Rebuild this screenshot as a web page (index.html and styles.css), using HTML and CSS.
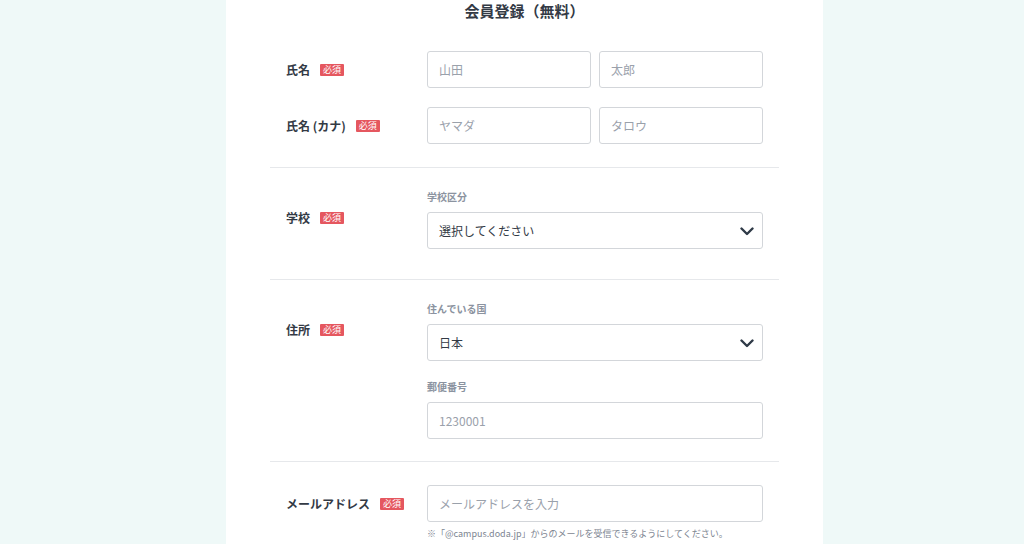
FILE: index.html
```html
<!DOCTYPE html>
<html lang="ja">
<head>
  <meta charset="UTF-8" />
  <meta name="viewport" content="width=device-width, initial-scale=1.0"/>
  <title>会員登録（無料）</title>
  <link rel="stylesheet" href="styles.css">
</head>
<body>

<div class="panel">
  <h1>会員登録（無料）</h1>

  <div class="section section-name">
    <div class="row">
      <div class="label">氏名<span class="req">必須</span></div>
      <div class="fields pair">
        <input type="text" placeholder="山田" />
        <input type="text" placeholder="太郎" />
      </div>
    </div>
    <div class="row">
      <div class="label">氏名 (カナ)<span class="req">必須</span></div>
      <div class="fields pair">
        <input type="text" placeholder="ヤマダ" />
        <input type="text" placeholder="タロウ" />
      </div>
    </div>
  </div>

  <div class="section section-school">
    <div class="row">
      <div class="label label-top">学校<span class="req">必須</span></div>
      <div class="fields">
        <div class="sub">学校区分</div>
        <div class="select">
          <span>選択してください</span>
          <svg width="14" height="9" viewBox="0 0 14 9"><path d="M1.5 1.5 L7 7 L12.5 1.5" fill="none" stroke="#2f3a47" stroke-width="2.4" stroke-linecap="round" stroke-linejoin="round"/></svg>
        </div>
      </div>
    </div>
  </div>

  <div class="section section-address">
    <div class="row">
      <div class="label label-top">住所<span class="req">必須</span></div>
      <div class="fields">
        <div class="sub">住んでいる国</div>
        <div class="select">
          <span>日本</span>
          <svg width="14" height="9" viewBox="0 0 14 9"><path d="M1.5 1.5 L7 7 L12.5 1.5" fill="none" stroke="#2f3a47" stroke-width="2.4" stroke-linecap="round" stroke-linejoin="round"/></svg>
        </div>
        <div class="sub sub-next">郵便番号</div>
        <input type="text" placeholder="1230001" />
      </div>
    </div>
  </div>

  <div class="section section-mail">
    <div class="row">
      <div class="label">メールアドレス<span class="req">必須</span></div>
      <div class="fields">
        <input type="text" placeholder="メールアドレスを入力" />
        <p class="note">※「@campus.doda.jp」からのメールを受信できるようにしてください。</p>
      </div>
    </div>
  </div>
</div>

</body>
</html>
```

FILE: styles.css
```css
* {
  box-sizing: border-box;
}

body {
  margin: 0;
  padding: 0;
  font-family: 'Noto Sans CJK JP', 'Noto Sans', sans-serif;
  background: #eff9f8;
  color: #333a45;
  min-height: 100vh;
}

.panel {
  background: #fff;
  width: 597px;
  margin-left: 226px;
  padding: 0 44px;
  min-height: 544px;
}

.panel h1 {
  margin: 0;
  height: 24px;
  line-height: 22px;
  text-align: center;
  font-size: 15px;
  font-weight: bold;
  color: #333a45;
}

.section {
  border-bottom: 1px solid #e6e8eb;
}

.section-name {
  padding: 27px 0 23px;
}

.section-school {
  padding: 21px 0 30px;
}

.section-address {
  padding: 21px 0 22px;
}

.section-mail {
  padding: 23px 0 0;
  border-bottom: none;
}

.row {
  display: flex;
  padding-left: 16px;
}

.row + .row {
  margin-top: 19px;
}

.label {
  width: 141px;
  height: 37px;
  display: flex;
  align-items: center;
  font-size: 12px;
  font-weight: bold;
  color: #333a45;
  flex-shrink: 0;
}

.label-top {
  margin-top: 10px;
}

.req {
  display: inline-block;
  margin-left: 10px;
  background: #e5575f;
  color: #fff;
  font-size: 9px;
  font-weight: normal;
  line-height: 12px;
  padding: 0 3px;
  border-radius: 1px;
}

.fields {
  width: 336px;
}

.pair {
  display: flex;
  gap: 8px;
}

.pair input {
  width: 164px;
}

input {
  display: block;
  width: 100%;
  height: 37px;
  padding: 0 11px;
  border: 1px solid #d3d6da;
  border-radius: 3px;
  font-family: inherit;
  font-size: 12px;
  color: #333a45;
  background: #fff;
}

input::placeholder {
  color: #9aa1ab;
}

.sub {
  font-size: 10px;
  font-weight: bold;
  color: #8b93a0;
  line-height: 16px;
  margin-bottom: 7px;
}

.sub-next {
  margin-top: 18px;
}

.select {
  height: 37px;
  border: 1px solid #d3d6da;
  border-radius: 3px;
  display: flex;
  align-items: center;
  justify-content: space-between;
  padding: 0 8px 0 11px;
  font-size: 12px;
  color: #333a45;
}

.select svg {
  display: block;
  margin-top: 1px;
}

.note {
  margin: 5px 0 0;
  font-size: 9px;
  color: #7d8591;
  line-height: 14px;
}
```
